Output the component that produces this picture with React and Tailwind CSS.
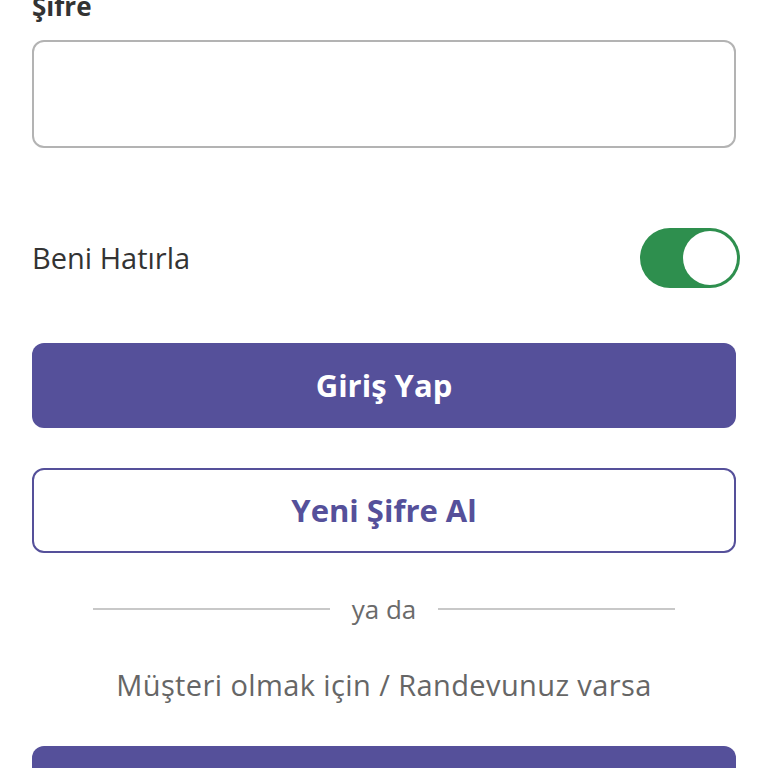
import React, { useState } from "react";

const App = () => {
  const [remember, setRemember] = useState(true);

  return (
    <div
      className="h-[768px] w-full overflow-hidden bg-white px-8"
      style={{ fontFamily: "'Open Sans', Lato, sans-serif" }}
    >
      <label className="-mt-[11px] block text-[26px] font-bold leading-[34px] text-[#333333]">
        Şifre
      </label>
      <input
        type="password"
        className="mt-[17px] block h-[108px] w-full rounded-[12px] border-2 border-[#b3b3b3] px-4 text-[26px] outline-none"
      />

      <div className="mt-[80px] flex items-center justify-between">
        <span className="text-[29px] leading-[36px] text-[#333333]">Beni Hatırla</span>
        <button
          type="button"
          onClick={() => setRemember(!remember)}
          className="-mr-1 flex h-[60px] w-[100px] items-center justify-end rounded-full bg-[#2e8f4e] p-[3px]"
        >
          <span className="block h-[54px] w-[54px] rounded-full bg-white" />
        </button>
      </div>

      <button
        type="button"
        className="mt-[55px] flex h-[85px] w-full items-center justify-center rounded-[12px] bg-[#55509a] text-[31px] font-bold text-white"
      >
        Giriş Yap
      </button>

      <button
        type="button"
        className="mt-[40px] flex h-[85px] w-full items-center justify-center rounded-[12px] border-2 border-[#55509a] bg-white text-[31px] font-bold text-[#55509a]"
      >
        Yeni Şifre Al
      </button>

      <div className="mt-[40px] flex items-center justify-center gap-[22px] px-[61px]">
        <div className="h-[2px] flex-1 bg-[#c8c8c8]" />
        <span className="text-[26px] leading-[32px] text-[#6a6a6a]">ya da</span>
        <div className="h-[2px] flex-1 bg-[#c8c8c8]" />
      </div>

      <p className="mt-[42px] text-center text-[29px] leading-[36px] tracking-[0.4px] text-[#666666]">
        Müşteri olmak için / Randevunuz varsa
      </p>

      <button
        type="button"
        className="mt-[43px] flex h-[85px] w-full items-center justify-center rounded-[12px] bg-[#55509a] text-[31px] font-bold text-white"
      >
        Randevu Al
      </button>
    </div>
  );
};

export default App;
